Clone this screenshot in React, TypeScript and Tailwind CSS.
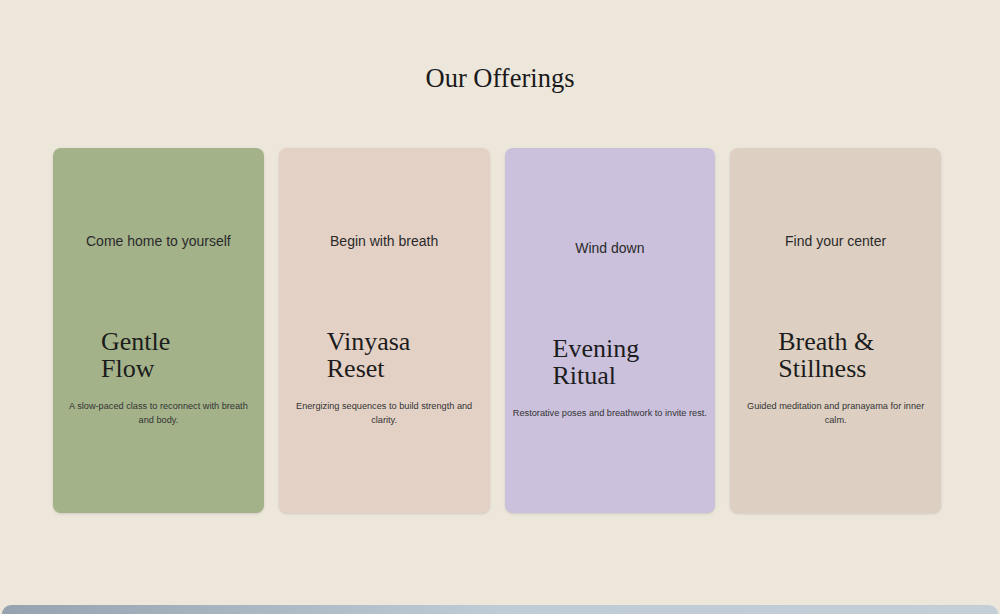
type Offering = {
  tagline: string;
  title: string[];
  text: string;
  bg: string;
};

const offerings: Offering[] = [
  {
    tagline: "Come home to yourself",
    title: ["Gentle", "Flow"],
    text: "A slow-paced class to reconnect with breath and body.",
    bg: "bg-[#a4b28a]",
  },
  {
    tagline: "Begin with breath",
    title: ["Vinyasa", "Reset"],
    text: "Energizing sequences to build strength and clarity.",
    bg: "bg-[#e4d1c6]",
  },
  {
    tagline: "Wind down",
    title: ["Evening", "Ritual"],
    text: "Restorative poses and breathwork to invite rest.",
    bg: "bg-[#cbc1dc]",
  },
  {
    tagline: "Find your center",
    title: ["Breath &", "Stillness"],
    text: "Guided meditation and pranayama for inner calm.",
    bg: "bg-[#ddd0c2]",
  },
];

function OfferingCard({ tagline, title, text, bg }: Offering) {
  return (
    <div className={`${bg} h-[365px] pb-1 rounded-lg shadow-sm flex flex-col justify-center items-center text-[#1c1c1c]`}>
      <p className="text-[14px] leading-5 font-['Liberation_Sans',sans-serif] text-[#2a2a2a]">{tagline}</p>
      <h3 className="w-full pl-12 mt-[77px] text-[26px] leading-[27px] font-['Liberation_Serif',serif] text-left">
        {title[0]}
        <br />
        {title[1]}
      </h3>
      <p className="mt-[17px] px-2 text-[9.2px] leading-[14px] text-center font-['Liberation_Sans',sans-serif] text-[#333]">
        {text}
      </p>
    </div>
  );
}

export default function App() {
  return (
    <div className="w-full h-[614px] bg-[#ede6db] flex flex-col overflow-hidden">
      <div className="flex flex-col items-center pt-[60px]">
        <h2 className="text-[26.5px] leading-9 font-['Liberation_Serif',serif] text-[#1a1a1a]">Our Offerings</h2>
      </div>
      <div className="grid grid-cols-4 gap-[15px] w-[888px] ml-[53px] mt-[52px]">
        {offerings.map((o) => (
          <OfferingCard key={o.tagline} {...o} />
        ))}
      </div>
      <div className="mt-auto mx-[2px] h-[9px] rounded-t-[10px] bg-gradient-to-r from-[#96a2af] via-[#bfcbd5] to-[#c3ced7]"></div>
    </div>
  );
}
